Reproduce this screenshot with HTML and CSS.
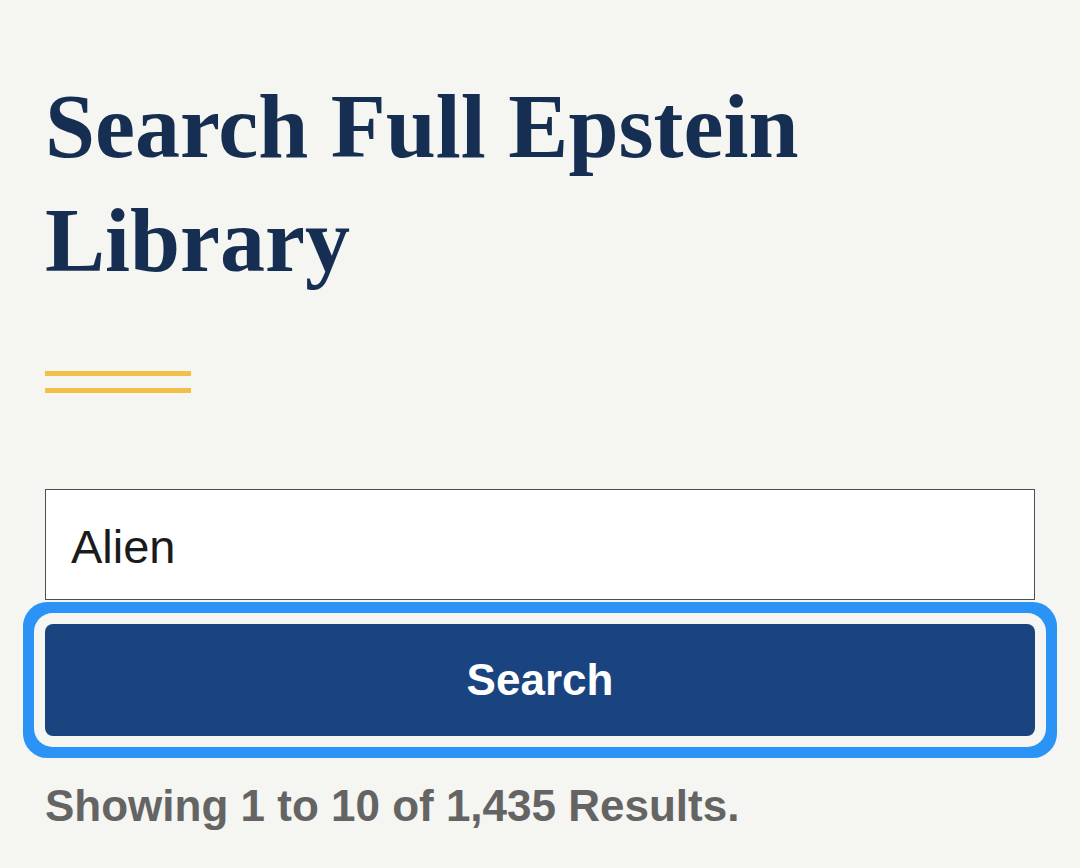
FILE: index.html
```html
<!DOCTYPE html>
<html lang="en">
<head>
<meta charset="utf-8">
<title>Search Full Epstein Library</title>
<link rel="stylesheet" href="styles.css">
</head>
<body>
<main class="page">
  <h1 class="title">Search Full Epstein Library</h1>
  <div class="rule"></div>
  <form class="search-form">
    <input class="search-input" type="text" value="Alien" aria-label="Search">
    <button class="search-button is-focused" type="button">Search</button>
  </form>
  <p class="results">Showing 1 to 10 of 1,435 Results.</p>
</main>
</body>
</html>
```
FILE: styles.css
```css
html, body {
  margin: 0;
  padding: 0;
  background: #f5f5f1;
}

.page {
  padding: 70px 45px 0;
  display: flex;
  flex-direction: column;
}

.title {
  margin: 0;
  font-family: "Liberation Serif", "Times New Roman", serif;
  font-weight: 700;
  font-size: 90px;
  line-height: 114px;
  color: #162e51;
}

.rule {
  margin-top: 73px;
  width: 146px;
  height: 12px;
  border-top: 5px solid #f2bf49;
  border-bottom: 5px solid #f2bf49;
}

.search-form {
  margin-top: 96px;
  display: flex;
  flex-direction: column;
  gap: 24px;
}

.search-input {
  box-sizing: border-box;
  width: 100%;
  height: 111px;
  margin: 0;
  padding: 3px 25px 0;
  border: 1px solid #4a4f54;
  border-radius: 0;
  background: #ffffff;
  font-family: "Liberation Sans", Arial, sans-serif;
  font-size: 47px;
  color: #1b1b1b;
  outline: none;
}

.search-button {
  box-sizing: border-box;
  width: 100%;
  height: 112px;
  margin: 0;
  padding: 0;
  border: 0;
  border-radius: 8px;
  background: #1a4480;
  color: #ffffff;
  font-family: "Liberation Sans", Arial, sans-serif;
  font-weight: 700;
  font-size: 44px;
  cursor: pointer;
}

.search-button.is-focused {
  box-shadow: 0 0 0 11px #f5f5f1, 0 0 0 22px #2a93f5;
}

.results {
  margin: 44px 0 0;
  font-family: "Liberation Sans", Arial, sans-serif;
  font-weight: 700;
  font-size: 44px;
  line-height: 1.2;
  color: #646464;
}
```
